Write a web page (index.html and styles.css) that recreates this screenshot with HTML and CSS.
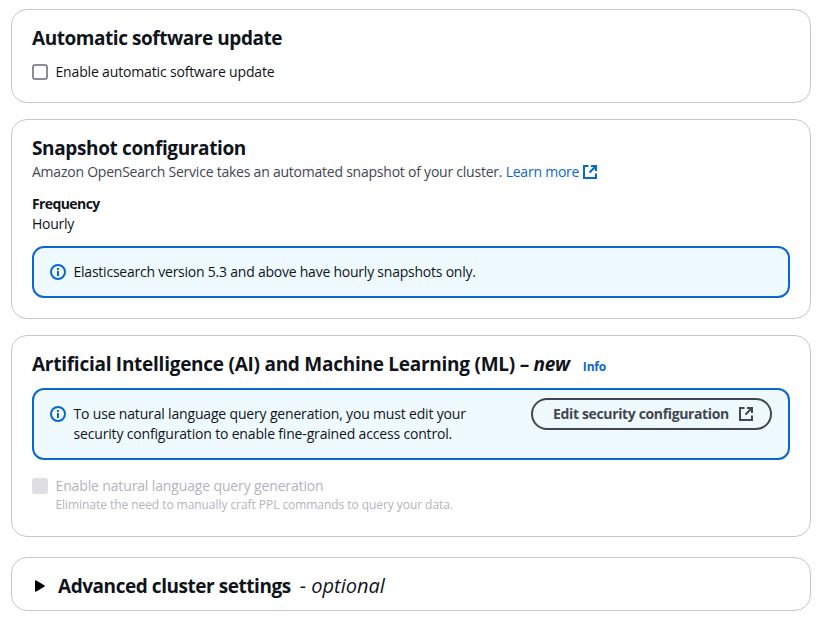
FILE: index.html
```html
<!DOCTYPE html>
<html lang="en">
<head>
<meta charset="utf-8">
<title>Cluster settings</title>
<link rel="stylesheet" href="styles.css">
</head>
<body>
<main class="page">
  <section class="card update">
    <h2>Automatic software update</h2>
    <label class="option"><span class="box"></span><span class="option-label">Enable automatic software update</span></label>
  </section>

  <section class="card snapshot">
    <h2>Snapshot configuration</h2>
    <p class="description">Amazon OpenSearch Service takes an automated snapshot of your cluster. <a class="link">Learn more <svg class="icon ext" viewBox="0 0 16 16"><path d="M9 2h5v5M7.5 8.5L14 2M14 9.5V14H2V2h4.5"/></svg></a></p>
    <div class="field"><div class="key">Frequency</div><div class="value">Hourly</div></div>
    <div class="alert">
      <svg class="icon info-icon" viewBox="0 0 16 16"><circle cx="8" cy="8" r="7"/><path d="M8 12V7M8 6V4"/></svg>
      <p class="alert-text">Elasticsearch version 5.3 and above have hourly snapshots only.</p>
    </div>
  </section>

  <section class="card ai">
    <div class="heading"><h2>Artificial Intelligence (AI) and Machine Learning (ML) – <i>new</i></h2><a class="info">Info</a></div>
    <div class="alert tall">
      <svg class="icon info-icon" viewBox="0 0 16 16"><circle cx="8" cy="8" r="7"/><path d="M8 12V7M8 6V4"/></svg>
      <p class="alert-text">To use natural language query generation, you must edit your<br>security configuration to enable fine-grained access control.</p>
      <button class="button"><span>Edit security configuration</span><svg class="icon" viewBox="0 0 16 16"><path d="M9 2h5v5M7.5 8.5L14 2M14 9.5V14H2V2h4.5"/></svg></button>
    </div>
    <label class="option disabled"><span class="box"></span><span><span class="option-label">Enable natural language query generation</span><small>Eliminate the need to manually craft PPL commands to query your data.</small></span></label>
  </section>

  <section class="card advanced">
    <svg class="caret" viewBox="0 0 12 12"><path d="M1 1.2Q1-.3 2.3.4L10.3 5.3Q11.2 6 10.3 6.7L2.3 11.6Q1 12.3 1 10.8z"/></svg>
    <h2>Advanced cluster settings</h2><i class="optional">- optional</i>
  </section>
</main>
</body>
</html>
```

FILE: styles.css
```css
* { box-sizing: border-box; }
body { margin: 0; background: #fff; color: #0f141a; font: 14px/20px "Open Sans", "Noto Sans", sans-serif; letter-spacing: -.16px; }
h2, p { margin: 0; }
.page { padding: 9px 14px 0 11px; display: flex; flex-direction: column; }
.card { width: 800px; border: 1px solid #c6c6cd; border-radius: 16px; padding: 16px 20px 0; }
.update { height: 94px; }
.snapshot { height: 200px; margin-top: 16px; }
.ai { height: 202px; margin-top: 16px; }
.advanced { height: 54px; margin-top: 20px; padding: 3px 22px 0; display: flex; align-items: center; }
h2 { font-size: 19px; line-height: 24px; font-weight: 700; letter-spacing: -.45px; white-space: nowrap; }
.snapshot h2 { letter-spacing: -.37px; }
.ai h2 { letter-spacing: -.26px; }
.icon { width: 16px; height: 16px; flex: none; fill: none; stroke: currentColor; stroke-width: 2; }
.option { display: flex; gap: 7.5px; margin-top: 12px; }
.box { width: 16px; height: 16px; margin-top: 2px; border: 2px solid #8c8c94; border-radius: 3px; flex: none; }
.description { color: #424650; margin-top: 2px; letter-spacing: -.23px; }
.link { color: #0868cf; }
.ext { vertical-align: -3px; margin-left: -1px; }
.field { margin-top: 12px; }
.key { font-weight: 700; letter-spacing: -.6px; }
.value { letter-spacing: -.25px; }
.alert { margin-top: 12px; width: 758px; height: 52px; border: 2px solid #0868cf; border-radius: 12px; background: #effaff; padding: 14px 16px; display: flex; letter-spacing: -.23px; }
.info-icon { color: #0868cf; margin: 2px 7.5px 0 0; }
.alert-text { white-space: nowrap; }
.tall { height: 72px; letter-spacing: -.17px; }
.button { margin: -6px 0 0 auto; width: 241px; height: 32px; border: 2px solid #424650; border-radius: 20px; background: transparent; color: #424650; font: inherit; font-weight: 700; letter-spacing: -.36px; display: flex; align-items: center; justify-content: center; gap: 9px; padding: 0 0 0 4px; white-space: nowrap; }
.heading { display: flex; height: 24px; }
.info { font-size: 12px; font-weight: 700; color: #0868cf; margin: 5px 0 0 13px; }
.disabled { color: #b4b4bb; margin-top: 16px; letter-spacing: -.14px; }
.disabled .box { background: #dedee3; border-color: #dedee3; }
small { display: block; font-size: 12px; line-height: 18px; letter-spacing: -.06px; }
.caret { width: 12px; height: 12px; margin-right: 12px; margin-top: 1px; }
.optional { font-size: 20px; letter-spacing: 0; margin-left: 9px; }
```
